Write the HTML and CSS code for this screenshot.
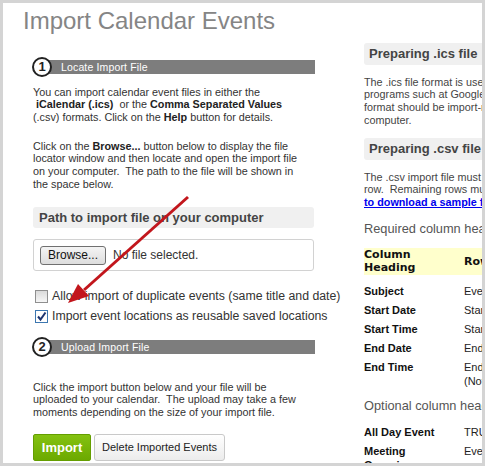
FILE: index.html
```html
<!DOCTYPE html>
<html>
<head>
<meta charset="utf-8">
<link rel="stylesheet" href="styles.css">
</head>
<body>
<div class="frame">
  <h1 class="title">Import Calendar Events</h1>
  <div class="main">
    <div class="left">
      <div class="step"><span class="step-num">1</span><span class="step-bar">Locate Import File</span></div>
      <p class="txt p1">You can import calendar event files in either the<br><b>&nbsp;iCalendar (.ics)</b>&nbsp; or the <b>Comma Separated Values</b><br>(.csv) formats. Click on the <b>Help</b> button for details.</p>
      <p class="txt p2">Click on the <b>Browse...</b> button below to display the file<br>locator window and then locate and open the import file<br>on your computer.&nbsp; The path to the file will be shown in<br>the space below.</p>
      <div class="path-head">Path to import file on your computer</div>
      <div class="file-box"><span class="browse">Browse...</span><span class="nofile">No file selected.</span></div>
      <div class="checks">
        <div class="check"><span class="cb"></span>Allow import of duplicate events (same title and date)</div>
        <div class="check"><span class="cb checked"><svg viewBox="0 0 11 11" width="11" height="11"><path d="M2 5.5 L4.5 8.5 L9.5 1.5" fill="none" stroke="#1d3470" stroke-width="2"/></svg></span>Import event locations as reusable saved locations</div>
      </div>
      <div class="step step2"><span class="step-num">2</span><span class="step-bar">Upload Import File</span></div>
      <p class="txt p3">Click the import button below and your file will be<br>uploaded to your calendar.&nbsp; The upload may take a few<br>moments depending on the size of your import file.</p>
      <div class="actions"><span class="btn-import">Import</span><span class="btn-delete">Delete Imported Events</span></div>
    </div>
    <div class="right">
      <div class="r-head">Preparing .ics file</div>
      <p class="r-txt r1">The .ics file format is used by most calendar<br>programs such at Google Calendar and Outlook. This<br>format should be import-ready from your<br>computer.</p>
      <div class="r-head r-head2">Preparing .csv file</div>
      <p class="r-txt r2">The .csv import file must have column headings in the first<br>row.&nbsp; Remaining rows must contain event data. Click here<br><a href="#" class="link">to download a sample file</a>.</p>
      <p class="r-sub">Required column headings:</p>
      <table class="cols">
        <tr class="th"><td>Column<br>Heading</td><td>Row data</td></tr>
        <tr class="first"><td>Subject</td><td>Event title</td></tr>
        <tr><td>Start Date</td><td>Start date of event</td></tr>
        <tr><td>Start Time</td><td>Start time of event</td></tr>
        <tr><td>End Date</td><td>End date of event</td></tr>
        <tr><td>End Time</td><td>End time of event<br>(Not required for all day events)</td></tr>
      </table>
      <p class="r-sub r-sub2">Optional column headings:</p>
      <table class="cols cols2">
        <tr><td>All Day Event</td><td>TRUE or FALSE</td></tr>
        <tr><td>Meeting<br>Organizer</td><td>Event organizer</td></tr>
      </table>
    </div>
  </div>
  <svg class="arrow" viewBox="3 3 479 460" width="479" height="460">
    <line x1="188" y1="197" x2="84" y2="290" stroke="#c2161c" stroke-width="3"/>
    <polygon points="68,303 89,296 78,284" fill="#c2161c"/>
  </svg>
</div>
</body>
</html>
```

FILE: styles.css
```css
html, body {
  margin: 0;
  padding: 0;
}
body {
  background: #d4d4d4;
  font-family: "Liberation Sans", Arial, sans-serif;
}
.frame {
  position: relative;
  margin: 3px 3px 0 3px;
  height: 460px;
  background: #fff;
  overflow: hidden;
}
.title {
  margin: 0;
  padding: 4px 0 0 20px;
  font-size: 24px;
  line-height: 28px;
  font-weight: normal;
  color: #858585;
}
.main {
  display: flex;
  align-items: flex-start;
  gap: 50px;
  margin-top: 8px;
}
.left {
  flex: none;
  width: 281px;
  margin-left: 30px;
  padding-top: 14px;
}
.step {
  display: flex;
  align-items: center;
  height: 20px;
  margin: 0 -1px;
}
.step-num {
  position: relative;
  z-index: 1;
  flex: none;
  width: 16px;
  height: 16px;
  border: 2px solid #222;
  border-radius: 50%;
  background: #fff;
  font-weight: bold;
  font-size: 13px;
  line-height: 16px;
  text-align: center;
  color: #222;
}
.step-bar {
  flex: 1;
  height: 14px;
  margin-left: -13px;
  padding-left: 22px;
  background: #7d7d7d;
  color: #fff;
  font-size: 10.5px;
  line-height: 14px;
  letter-spacing: 0.15px;
}
.txt {
  margin: 0;
  font-size: 10.8px;
  line-height: 12.7px;
  color: #333;
  white-space: nowrap;
}
.txt b {
  color: #222;
}
.p1 { margin-top: 8.6px; }
.p2 { margin-top: 16px; }
.path-head {
  margin-top: 16.5px;
  height: 21px;
  line-height: 21px;
  padding-left: 6px;
  background: #f0f0f0;
  border-radius: 3px;
  font-size: 13px;
  font-weight: bold;
  color: #444;
}
.file-box {
  display: flex;
  align-items: center;
  margin-top: 11px;
  height: 30px;
  padding-left: 6px;
  border: 1px solid #d2d2d2;
  border-radius: 3px;
}
.browse {
  box-sizing: border-box;
  width: 66px;
  height: 19px;
  border: 1px solid #707070;
  border-radius: 3px;
  background: linear-gradient(#f4f4f4, #dddddd);
  font-size: 12px;
  line-height: 17px;
  text-align: center;
  color: #111;
}
.nofile {
  margin-left: 7px;
  font-size: 12px;
  color: #333;
}
.checks {
  margin-top: 15px;
}
.check {
  display: flex;
  align-items: center;
  height: 20px;
  font-size: 12.3px;
  color: #333;
  white-space: nowrap;
}
.cb {
  box-sizing: border-box;
  flex: none;
  width: 13px;
  height: 13px;
  margin: 0 4px 0 2px;
  border: 1px solid #8f8f8f;
  background: linear-gradient(#dadada, #f6f6f6);
}
.cb.checked {
  border-color: #3d77b0;
  background: #fff;
}
.cb svg {
  display: block;
}
.step2 { margin-top: 11px; }
.p3 { margin-top: 23.5px; }
.actions {
  display: flex;
  gap: 3px;
  margin-top: 15.4px;
}
.btn-import {
  box-sizing: border-box;
  width: 58px;
  height: 27px;
  border: 1px solid #649e00;
  border-radius: 2px;
  background: linear-gradient(#84c211, #6ca900);
  color: #fff;
  font-weight: bold;
  font-size: 13px;
  line-height: 25px;
  text-align: center;
}
.btn-delete {
  box-sizing: border-box;
  width: 131px;
  height: 27px;
  border: 1px solid #c9c9c9;
  border-radius: 3px;
  background: linear-gradient(#ffffff, #ececec);
  color: #222;
  font-size: 11px;
  line-height: 25px;
  text-align: center;
}
.right {
  flex: none;
  width: 330px;
}
.r-head {
  height: 22px;
  line-height: 22px;
  padding-left: 5px;
  background: #f0f0f0;
  border-radius: 3px 0 0 3px;
  font-size: 13px;
  font-weight: bold;
  color: #444;
  white-space: nowrap;
}
.r-head2 { margin-top: 12px; }
.r-txt {
  margin: 0;
  font-size: 10.8px;
  line-height: 12.7px;
  color: #444;
  white-space: nowrap;
}
.r1 { margin-top: 10.5px; }
.r2 { margin-top: 10.3px; }
.link {
  color: #0000ee;
  font-weight: bold;
  text-decoration: underline;
}
.r-sub {
  margin: 12.7px 0 0;
  font-size: 12.8px;
  line-height: 15px;
  color: #555;
  white-space: nowrap;
}
.r-sub2 { margin-top: 8px; }
.cols {
  width: 330px;
  margin-top: 11.5px;
  border-collapse: collapse;
  font-size: 11px;
}
.cols2 { margin-top: 9px; }
.cols td {
  padding: 2.5px 0;
  line-height: 14px;
  vertical-align: top;
  white-space: nowrap;
  color: #222;
}
.cols td:first-child {
  width: 100px;
  font-weight: bold;
  color: #111;
}
.cols .th td {
  padding: 0;
  background: #ffffcc;
  font-family: "DejaVu Sans", Verdana, sans-serif;
  font-weight: bold;
  font-size: 11px;
  line-height: 13.5px;
  vertical-align: middle;
  color: #111;
}
.cols .first td {
  padding-top: 9px;
}
.arrow {
  position: absolute;
  left: 0;
  top: 0;
  pointer-events: none;
}
```
